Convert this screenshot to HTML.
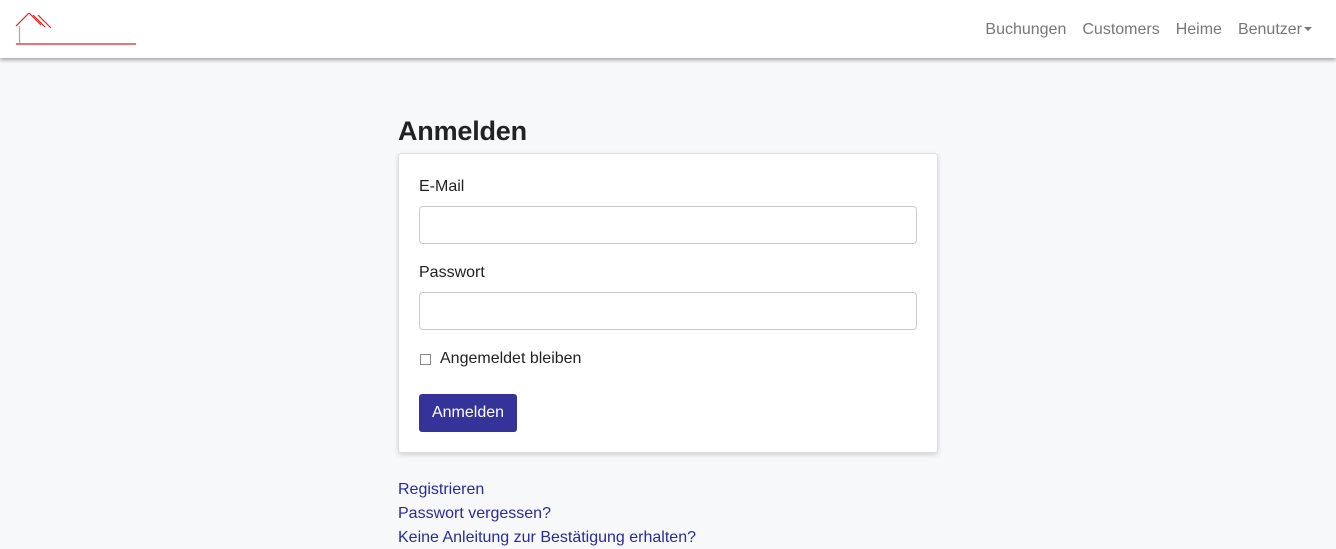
<!DOCTYPE html>
<html><head><style>
body{margin:0;background:#f7f8fa;font-family:"Liberation Sans",sans-serif;width:1336px;height:549px;overflow:hidden;position:relative}
.nav{position:absolute;top:0;left:0;right:0;height:58px;background:#fff;box-shadow:0 2px 4px rgba(0,0,0,.35)}
.links{position:absolute;right:24px;top:21px;font-size:16px;color:#777}
.links span{margin-left:16px}
.caret{display:inline-block;width:0;height:0;border-left:4px solid transparent;border-right:4px solid transparent;border-top:4px solid #777;vertical-align:3px;margin-left:2px}
h1{position:absolute;left:398px;top:116px;margin:0;font-size:27px;font-weight:bold;color:#222;letter-spacing:-0.2px}
.card{position:absolute;left:398px;top:153px;width:538px;height:298px;background:#fff;border:1px solid #ddd;border-radius:3px;box-shadow:0 2px 5px rgba(0,0,0,.15)}
.lbl{position:absolute;left:20px;font-size:16px;color:#222}
.inp{position:absolute;left:20px;width:496px;height:36px;border:1px solid #ccc;border-radius:4px}
.cb{position:absolute;left:21px;top:200px;width:9px;height:9px;border:1px solid #888}
.btn{position:absolute;left:20px;top:240px;width:98px;height:38px;background:#33339a;border-radius:3px;color:#fff;font-size:16px;text-align:center;line-height:38px}
.a{position:absolute;left:398px;font-size:16px;color:#2a2a9a}
</style></head><body>
<div class="nav">
<svg width="160" height="58" style="position:absolute;left:0;top:0">
<line x1="16" y1="26" x2="29" y2="13" stroke="#d22" stroke-width="1.2"/>
<line x1="29" y1="13" x2="41" y2="25" stroke="#d22" stroke-width="1.2"/>
<line x1="33" y1="15" x2="45" y2="27" stroke="#d22" stroke-width="1.2"/>
<line x1="38" y1="15" x2="51" y2="28" stroke="#d22" stroke-width="1.2"/>
<line x1="19.5" y1="26" x2="19.5" y2="43" stroke="#aaa" stroke-width="1.2"/>
<line x1="16" y1="44" x2="136" y2="44" stroke="#d22" stroke-width="1.2"/>
</svg>
<div class="links"><span>Buchungen</span><span>Customers</span><span>Heime</span><span>Benutzer<i class="caret"></i></span></div>
</div>
<h1>Anmelden</h1>
<div class="card">
<div class="lbl" style="top:24px">E-Mail</div>
<div class="inp" style="top:52px"></div>
<div class="lbl" style="top:110px">Passwort</div>
<div class="inp" style="top:138px"></div>
<div class="cb"></div>
<div class="lbl" style="left:41px;top:196px">Angemeldet bleiben</div>
<div class="btn">Anmelden</div>
</div>
<div class="a" style="top:481px">Registrieren</div>
<div class="a" style="top:505px">Passwort vergessen?</div>
<div class="a" style="top:529px">Keine Anleitung zur Bestätigung erhalten?</div>
</body></html>
